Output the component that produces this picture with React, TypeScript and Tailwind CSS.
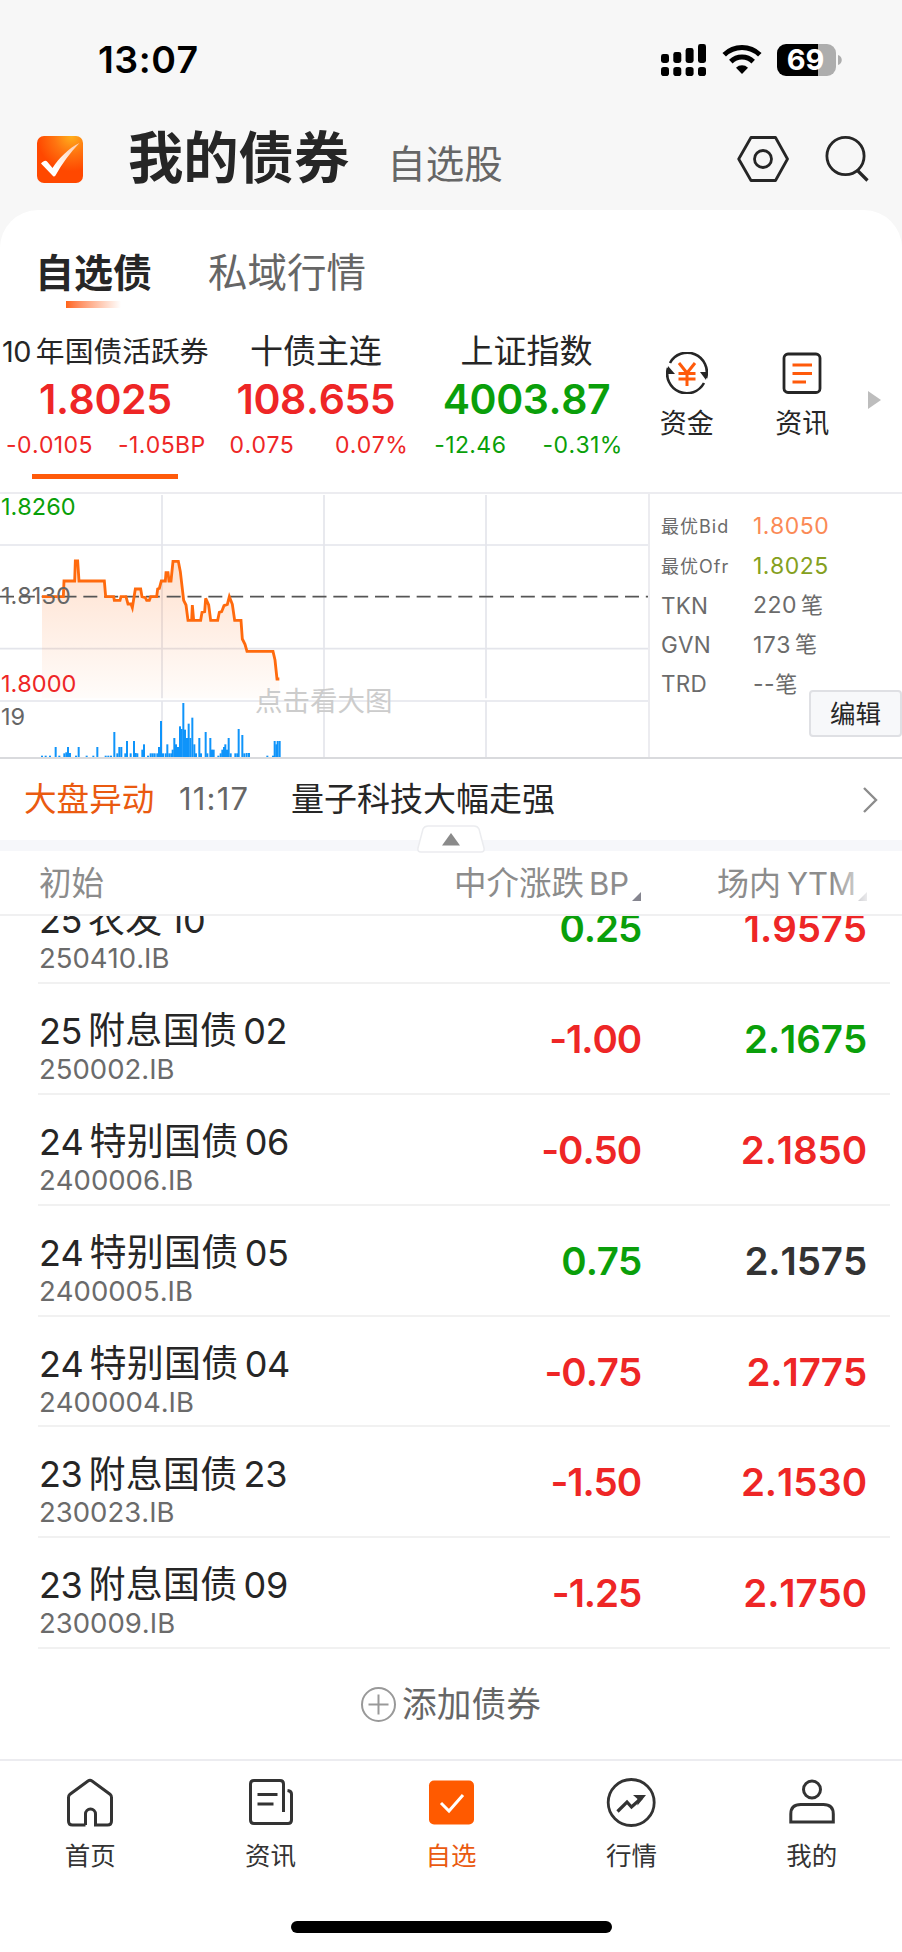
import type { ReactNode } from "react";

type Quote = {
  prefix?: string;
  name: string;
  nameClass: string;
  price: string;
  change: string;
  percent: string;
  color: string;
  padding: string;
  active?: boolean;
};

const quotes: Quote[] = [
  {
    prefix: "10",
    name: "年国债活跃券",
    nameClass: "text-[28.8px]",
    price: "1.8025",
    change: "-0.0105",
    percent: "-1.05BP",
    color: "text-[#ee2626]",
    padding: "pl-[6px] pr-[5px]",
    active: true,
  },
  {
    name: "十债主连",
    nameClass: "text-[33px]",
    price: "108.655",
    change: "0.075",
    percent: "0.07%",
    color: "text-[#ee2626]",
    padding: "pl-[19px] pr-[13px]",
  },
  {
    name: "上证指数",
    nameClass: "text-[33px]",
    price: "4003.87",
    change: "-12.46",
    percent: "-0.31%",
    color: "text-[#0a9f0a]",
    padding: "pl-[13px] pr-[9px]",
  },
];

const depth = [
  { label: "最优Bid", value: "1.8050", unit: "", small: true, gap: "", color: "text-[#fb8a56]" },
  { label: "最优Ofr", value: "1.8025", unit: "", small: true, gap: "", color: "text-[#85a01e]" },
  { label: "TKN", value: "220", unit: "笔", small: false, gap: "gap-[4px]", color: "text-[#6b6b6b]" },
  { label: "GVN", value: "173", unit: "笔", small: false, gap: "gap-[4px]", color: "text-[#6b6b6b]" },
  { label: "TRD", value: "--", unit: "笔", small: false, gap: "", color: "text-[#6b6b6b]" },
];

const RED = "text-[#ee2626]";
const GREEN = "text-[#0a9f0a]";
const DARK = "text-[#333]";

const bonds = [
  { year: "25", name: "农发", no: "10", code: "250410.IB", bp: "0.25", bpColor: GREEN, ytm: "1.9575", ytmColor: RED },
  { year: "25", name: "附息国债", no: "02", code: "250002.IB", bp: "-1.00", bpColor: RED, ytm: "2.1675", ytmColor: GREEN },
  { year: "24", name: "特别国债", no: "06", code: "2400006.IB", bp: "-0.50", bpColor: RED, ytm: "2.1850", ytmColor: RED },
  { year: "24", name: "特别国债", no: "05", code: "2400005.IB", bp: "0.75", bpColor: GREEN, ytm: "2.1575", ytmColor: DARK },
  { year: "24", name: "特别国债", no: "04", code: "2400004.IB", bp: "-0.75", bpColor: RED, ytm: "2.1775", ytmColor: RED },
  { year: "23", name: "附息国债", no: "23", code: "230023.IB", bp: "-1.50", bpColor: RED, ytm: "2.1530", ytmColor: RED },
  { year: "23", name: "附息国债", no: "09", code: "230009.IB", bp: "-1.25", bpColor: RED, ytm: "2.1750", ytmColor: RED },
];

const pricePoints =
  "126,335 190,335 192,288 224,288 226,228 233,228 237,288 313,288 317,335 341,335 343,346 360,346 363,335 378,335 384,357 393,357 397,368 406,312 422,312 426,335 436,338 440,346 448,346 452,335 470,335 473,312 478,310 484,288 496,288 498,263 504,263 507,288 513,288 519,229 535,229 541,260 551,346 558,360 564,406 575,406 577,360 581,406 602,406 606,382 614,380 617,340 626,360 632,406 653,406 658,382 665,380 672,362 682,358 688,335 697,358 704,406 723,406 727,462 735,478 741,499 819,499 825,525 831,582 838,582";

// [x, height] of every volume bar, in chart units
const volumes: [number, number][] = [
  [126, 4], [137, 4], [150, 4], [167, 30], [178, 4], [193, 11], [199, 14], [204, 30], [210, 12], [228, 4],
  [236, 30], [260, 4], [280, 4], [292, 30], [317, 4], [325, 4], [333, 4], [343, 75], [352, 11], [358, 30],
  [364, 30], [376, 11], [381, 48], [392, 11], [402, 48], [407, 12], [412, 11], [427, 22], [432, 38], [444, 4],
  [452, 11], [458, 11], [464, 11], [472, 11], [477, 30], [483, 108], [489, 11], [497, 11], [502, 38], [508, 11],
  [514, 11], [518, 22], [523, 57], [528, 38], [534, 30], [540, 92], [545, 84], [550, 162], [555, 82], [561, 57],
  [566, 100], [571, 57], [577, 118], [583, 38], [588, 11], [598, 57], [603, 11], [617, 75], [622, 11], [631, 57],
  [636, 22], [641, 22], [655, 4], [662, 11], [667, 22], [672, 30], [676, 38], [681, 22], [686, 57], [692, 11],
  [706, 11], [712, 11], [716, 84], [727, 66], [733, 11], [740, 12], [747, 12], [802, 4], [819, 4], [824, 48],
  [829, 38], [833, 48], [839, 48],
];

function StatusBar() {
  return (
    <div className="flex h-[120px] items-center justify-between pr-[60px] pl-[98px]">
      <span className="text-[37.5px] font-semibold tracking-[0.5px] text-black">13:07</span>
      <div className="flex items-center">
        <svg width="46" height="32" viewBox="0 0 46 32">
          {[
            [0, 10],
            [12.3, 8],
            [24.6, 4],
            [37, 0],
          ].map(([x, top]) => (
            <g key={x}>
              <rect x={x} y={top} width="8" height={19 - top} rx="2.4" />
              <rect x={x} y="23" width="8" height="9" rx="2.8" />
            </g>
          ))}
        </svg>
        <svg width="40" height="30" viewBox="0 0 40 30" className="ml-[15px]" fill="none" stroke="#000" strokeWidth="5">
          <path d="M2.2 9.8a25.5 25.5 0 0 1 35.6 0" />
          <path d="M8.8 16.6a16 16 0 0 1 22.4 0" />
          <path d="M20 29l-6-6.2a8.6 8.6 0 0 1 12 0z" fill="#000" stroke="none" />
        </svg>
        <div className="relative ml-[15px] flex h-8 w-[59px] items-center justify-center rounded-[9px] bg-linear-to-r from-black from-[41px] to-[#adadad] to-[41px]">
          <span className="-ml-[2px] text-[29px] leading-8 font-bold text-white">69</span>
        </div>
        <svg width="4" height="10" viewBox="0 0 4 10" className="ml-[2px]">
          <path d="M0 0c5 1.5 5 8.5 0 10z" fill="#adadad" />
        </svg>
      </div>
    </div>
  );
}

function Header() {
  return (
    <div className="flex h-[78px] items-center pr-[33px] pl-[37px]">
      <svg width="46" height="47" viewBox="0 0 46 47">
        <defs>
          <radialGradient id="logo" cx="0.75" cy="0" r="0.75">
            <stop offset="0" stopColor="#ffb01c" />
            <stop offset="0.5" stopColor="#ff7410" />
            <stop offset="1" stopColor="#ff4800" />
          </radialGradient>
          <linearGradient id="tick" x1="0" y1="1" x2="1" y2="0">
            <stop offset="0.3" stopColor="#fff" />
            <stop offset="1" stopColor="#ffc9a8" />
          </linearGradient>
        </defs>
        <rect width="46" height="47" rx="7" fill="url(#logo)" />
        <path d="M4 27.5c3-3.5 5-3.5 6.5-1.5l5 6C22 22 32 12 42.5 7 33 17 25 27.5 18.5 39.5c-1 1.2-2.2 1.2-3 0z" fill="url(#tick)" />
      </svg>
      <h1 className="-mt-[3px] ml-[45px] text-[55.3px] leading-none font-bold text-[#262626]">我的债券</h1>
      <span className="mt-[11px] ml-[38px] text-[38.5px] leading-none text-[#666]">自选股</span>
      <div className="ml-auto flex items-center">
        <svg width="52" height="46" viewBox="0 0 52 46" fill="none" stroke="#262626" strokeWidth="2.8">
          <path d="M14 1.5h24.5L50.5 23 38.5 44.5H14L1.7 23z" strokeLinejoin="round" />
          <circle cx="26" cy="23" r="8.5" />
        </svg>
        <svg width="44" height="46" viewBox="0 0 44 46" className="ml-[36px]" fill="none" stroke="#262626" strokeWidth="2.8">
          <circle cx="20.5" cy="20" r="18.6" />
          <path d="M32.5 34.5l10 10" strokeWidth="3.2" />
        </svg>
      </div>
    </div>
  );
}

function QuoteStrip() {
  return (
    <div className="flex h-[184px]">
      {quotes.map((quote) => (
        <div key={quote.name} className="flex w-[210.6px] flex-col items-center pt-[22px]">
          <div className={`flex h-[44px] items-center gap-[5px] whitespace-nowrap text-[#262626] ${quote.nameClass}`}>
            {quote.prefix ? <span className="tracking-[-0.5px]">{quote.prefix}</span> : null}
            <span>{quote.name}</span>
          </div>
          <div className={`flex h-[52px] items-center text-[41px] font-semibold tracking-[-0.4px] ${quote.color}`}>{quote.price}</div>
          <div className={`flex h-[38px] w-full items-center justify-between text-[23px] tracking-[0.4px] ${quote.padding} ${quote.color}`}>
            <span>{quote.change}</span>
            <span>{quote.percent}</span>
          </div>
          {quote.active ? <span className="mt-[10px] h-[5px] w-[146px] bg-[#ff5a0a]" /> : null}
        </div>
      ))}
      <div className="flex w-[110px] flex-col items-center pt-[44px]">
        <svg width="42" height="42" viewBox="0 0 42 42" fill="none" stroke="#262626" strokeWidth="2.6">
          <path d="M4 11a19.6 19.6 0 0 1 36 15" />
          <path d="M38 31A19.6 19.6 0 0 1 2 16" />
          <path d="M2 14l7 8H1z" fill="#262626" stroke="none" />
          <path d="M40 28l-6-8h7z" fill="#262626" stroke="none" />
          <path d="M13 11l8 10 8-10M21 21v13M12.5 21.5h17M12.5 27h17" stroke="#ff5a0a" strokeWidth="3" />
        </svg>
        <span className="mt-[12px] text-[27px] leading-[36px] text-[#262626]">资金</span>
      </div>
      <div className="flex w-[121px] flex-col items-center pt-[44px]">
        <svg width="42" height="42" viewBox="0 0 42 42" fill="none" stroke="#262626" strokeWidth="2.8">
          <rect x="3" y="2" width="36" height="38.5" rx="4" />
          <path d="M11.5 13H31M11.5 21.5H31M11.5 30H25" stroke="#ff5a0a" strokeWidth="3" />
        </svg>
        <span className="mt-[12px] text-[27px] leading-[36px] text-[#262626]">资讯</span>
      </div>
      <svg width="14" height="18" viewBox="0 0 14 18" className="mt-[83px] ml-1">
        <path d="M1 0l13 9-13 9z" fill="#bdbdbd" />
      </svg>
    </div>
  );
}

function Chart() {
  return (
    <div className="relative h-[263px] w-[648px]">
      <svg width="648" height="263" viewBox="0 27 1944 789">
        <defs>
          <linearGradient id="area" x1="0" y1="228" x2="0" y2="640" gradientUnits="userSpaceOnUse">
            <stop offset="0" stopColor="#ff6a10" stopOpacity="0.2" />
            <stop offset="1" stopColor="#ff6a10" stopOpacity="0.02" />
          </linearGradient>
        </defs>
        <g stroke="#e4e5eb" strokeWidth="5">
          <path d="M0 180H1944M0 491H1944M0 648H1944" />
          <path d="M486 30V640M972 30V640M1458 30V640M486 648V816M972 648V816M1458 648V816" />
        </g>
        <polygon points={`126,640 ${pricePoints} 838,640`} fill="url(#area)" />
        <path d="M0 335H1944" stroke="#555" strokeWidth="5" strokeDasharray="42 20.5" />
        <polyline points={pricePoints} fill="none" stroke="#ff6a0d" strokeWidth="8.5" />
        {volumes.map(([x, height]) => (
          <rect key={x} x={x - 3} y={816 - height} width="6" height={height} fill="#0f94fa" />
        ))}
      </svg>
      <span className="absolute top-px left-px text-[23.5px] leading-[24px] text-[#0a9f0a]">1.8260</span>
      <span className="absolute top-[90px] left-px text-[23.5px] leading-[24px] text-[#666]">1.8130</span>
      <span className="absolute top-[178px] left-px text-[23.5px] leading-[24px] text-[#ee2626]">1.8000</span>
      <span className="absolute top-[211px] left-px text-[23.5px] leading-[24px] text-[#666]">19</span>
      <span className="absolute top-[191px] left-[255px] text-[27.5px] leading-[32px] text-[#ccc]">点击看大图</span>
    </div>
  );
}

function DepthPanel() {
  return (
    <div className="relative flex-1 border-l-2 border-[#ececf0] pt-[13px] pl-[11px]">
      {depth.map((row) => (
        <div key={row.label} className="flex h-[39.4px] items-center">
          <span className={`w-[92px] text-[#6b6b6b] ${row.small ? "text-[18px] tracking-[1px]" : "text-[22.5px] tracking-[0.2px]"}`}>
            {row.label}
          </span>
          <span className={`flex items-center text-[23px] tracking-[0.5px] ${row.gap} ${row.color}`}>
            <span>{row.value}</span>
            {row.unit ? <span className="text-[22px]">{row.unit}</span> : null}
          </span>
        </div>
      ))}
      <button className="absolute right-0 bottom-[20px] h-[47px] w-[93px] rounded-[4px] border-2 border-[#dfe0e4] bg-[#f7f8fa] text-[25.5px] leading-none text-[#262626]">
        编辑
      </button>
    </div>
  );
}

function NewsRow() {
  return (
    <div className="relative border-b-[11px] border-[#f6f7fa]">
      <div className="flex h-[81px] items-center pr-[24px] pl-[24px] text-[33px]">
        <span className="w-[155px] text-[32.6px] text-[#ea5a10]">大盘异动</span>
        <span className="w-[112px] text-[31px] tracking-[1.2px] text-[#666]">11:17</span>
        <span className="text-[#262626]">量子科技大幅走强</span>
        <svg width="16" height="28" viewBox="0 0 16 28" className="ml-auto" fill="none" stroke="#8c8c8c" strokeWidth="2.4">
          <path d="M2 2l12 12L2 26" />
        </svg>
      </div>
      <svg width="70" height="28" viewBox="0 0 70 28" className="absolute -bottom-[13px] left-[416px]">
        <path d="M12 1h46c2.5 0 4 1 5 3l5 19c.6 2.5-.5 4-3 4H5c-2.5 0-3.6-1.5-3-4L7 4c1-2 2.5-3 5-3z" fill="#fff" stroke="#ebecef" strokeWidth="1.5" />
        <path d="M35 8l9 12.5H26z" fill="#8a8a8a" />
      </svg>
    </div>
  );
}

function SortMark() {
  return (
    <svg width="9" height="9" viewBox="0 0 9 9" className="mt-6 ml-auto shrink-0 text-[#85858f]">
      <path d="M9 0v9H0z" fill="currentColor" />
    </svg>
  );
}

function BondTable() {
  return (
    <div>
      <div className="relative flex h-[65px] items-center border-b-2 border-[#f0f0f1] pt-[3px] text-[32.5px] text-[#8c8c8c]">
        <span className="w-[454px] pl-[39px]">初始</span>
        <div className="flex w-[187px] items-center whitespace-nowrap">
          <span>中介涨跌</span>
          <span className="ml-[5px] text-[31px]">BP</span>
          <SortMark />
        </div>
        <div className="mr-[35px] ml-auto flex w-[150px] items-center whitespace-nowrap">
          <span className="text-[32px]">场内</span>
          <span className="ml-[6px] text-[31px]">YTM</span>
          <SortMark />
        </div>
        <span className="absolute top-0 right-0 h-full w-[70px] bg-linear-to-r from-white/0 to-white to-60%" />
      </div>
      <div className="flex h-[733px] flex-col justify-end overflow-hidden pr-[12px] pl-[38px]">
        {bonds.map((bond) => (
          <div key={bond.code} className="flex h-[110.83px] shrink-0 border-b-2 border-[#f1f1f1]">
            <div className="w-[352px] pt-[25px] pl-px">
              <div className="flex h-[44px] items-center gap-[6px] text-[37px] whitespace-nowrap text-[#262626]">
                <span className="text-[36px] tracking-[-0.4px]">{bond.year}</span>
                <span className="tracking-[0.3px]">{bond.name}</span>
                <span className="text-[36px] tracking-[-0.4px]">{bond.no}</span>
              </div>
              <div className="text-[27.5px] leading-[32px] text-[#6b6b6b]">{bond.code}</div>
            </div>
            <div className={`w-[251px] pt-[33px] text-right text-[38.5px] leading-[44px] font-semibold tracking-[-1.1px] ${bond.bpColor}`}>
              {bond.bp}
            </div>
            <div className={`flex-1 pt-[33px] pr-[23px] text-right text-[38.5px] leading-[44px] font-semibold tracking-[-0.1px] ${bond.ytmColor}`}>
              {bond.ytm}
            </div>
          </div>
        ))}
      </div>
    </div>
  );
}

function NavItem({ label, active, children }: { label: string; active?: boolean; children: ReactNode }) {
  return (
    <div className="flex flex-1 flex-col items-center pt-[17px]">
      <svg width="52" height="50" viewBox="0 0 52 50" fill="none" stroke="#333" strokeWidth="3">
        {children}
      </svg>
      <span className={`mt-[10px] text-[25.5px] leading-[36px] ${active ? "text-[#ea5a10]" : "text-[#333]"}`}>{label}</span>
    </div>
  );
}

function BottomNav() {
  return (
    <div className="flex h-[162px] border-t-2 border-[#ececf0]">
      <NavItem label="首页">
        <path d="M21.5 47H8.5q-4 0-4-4V19.5q0-2 1.5-3.3L24 3q2-1.4 4 0l18 13.2q1.5 1.3 1.5 3.3V43q0 4-4 4H31.5V36a5 5 0 0 0-10 0v11" />
      </NavItem>
      <NavItem label="资讯">
        <path d="M38.5 34V6q0-3.5-3.5-3.5H9Q5.5 2.5 5.5 6v36q0 3.5 3.5 3.5h34q3.5 0 3.5-3.5V16q0-3-4-3.5M12.5 16.5h20M12.5 26h16" />
      </NavItem>
      <NavItem label="自选" active>
        <rect x="4" y="2.5" width="45" height="44" rx="5" fill="#ff5a00" stroke="none" />
        <path d="M16 25l8 8 14-16" stroke="#fff" />
      </NavItem>
      <NavItem label="行情">
        <circle cx="26.2" cy="24.5" r="23" strokeWidth="2.8" />
        <path d="M12.5 33.5l9.5-9.5 4.5 5 10-9" strokeWidth="3.2" />
        <path d="M28 17h13l-8.5 10.5V21z" fill="#333" stroke="none" />
      </NavItem>
      <NavItem label="我的">
        <circle cx="26" cy="11.5" r="8.5" />
        <path d="M4.8 44V36q0-9.5 10-9.5h22.5q10 0 10 9.5v8z" />
      </NavItem>
    </div>
  );
}

export default function App() {
  return (
    <div className="h-[1952px] w-[902px] overflow-hidden bg-[#f7f7f7] font-['Inter','Noto_Sans_CJK_SC',sans-serif] [font-kerning:none]">
      <StatusBar />
      <Header />
      <main className="mt-[12px] h-[1742px] rounded-t-[38px] bg-white">
        <div className="flex h-[98px] gap-[56px] pt-[36px] pl-[35px]">
          <div className="flex flex-col items-center">
            <span className="text-[39px] leading-[54px] font-bold text-[#262626]">自选债</span>
            <span className="mt-px h-[7px] w-[55px] bg-linear-to-r from-[#ff6414] to-white" />
          </div>
          <span className="text-[39.5px] leading-[54px] text-[#666]">私域行情</span>
        </div>
        <QuoteStrip />
        <div className="flex h-[267px] border-y-2 border-t-[#ececf0] border-b-[#d9dadd]">
          <Chart />
          <DepthPanel />
        </div>
        <NewsRow />
        <BondTable />
        <div className="flex h-[110px] items-center justify-center gap-[6px] text-[#666]">
          <svg width="35" height="35" viewBox="0 0 35 35" fill="none" stroke="#999" strokeWidth="2">
            <circle cx="17.5" cy="17.5" r="16.5" />
            <path d="M17.5 7.5v20M7.5 17.5h20" />
          </svg>
          <span className="text-[34.7px]">添加债券</span>
        </div>
        <BottomNav />
        <div className="mx-auto h-[12px] w-[321px] rounded-full bg-black" />
      </main>
    </div>
  );
}
